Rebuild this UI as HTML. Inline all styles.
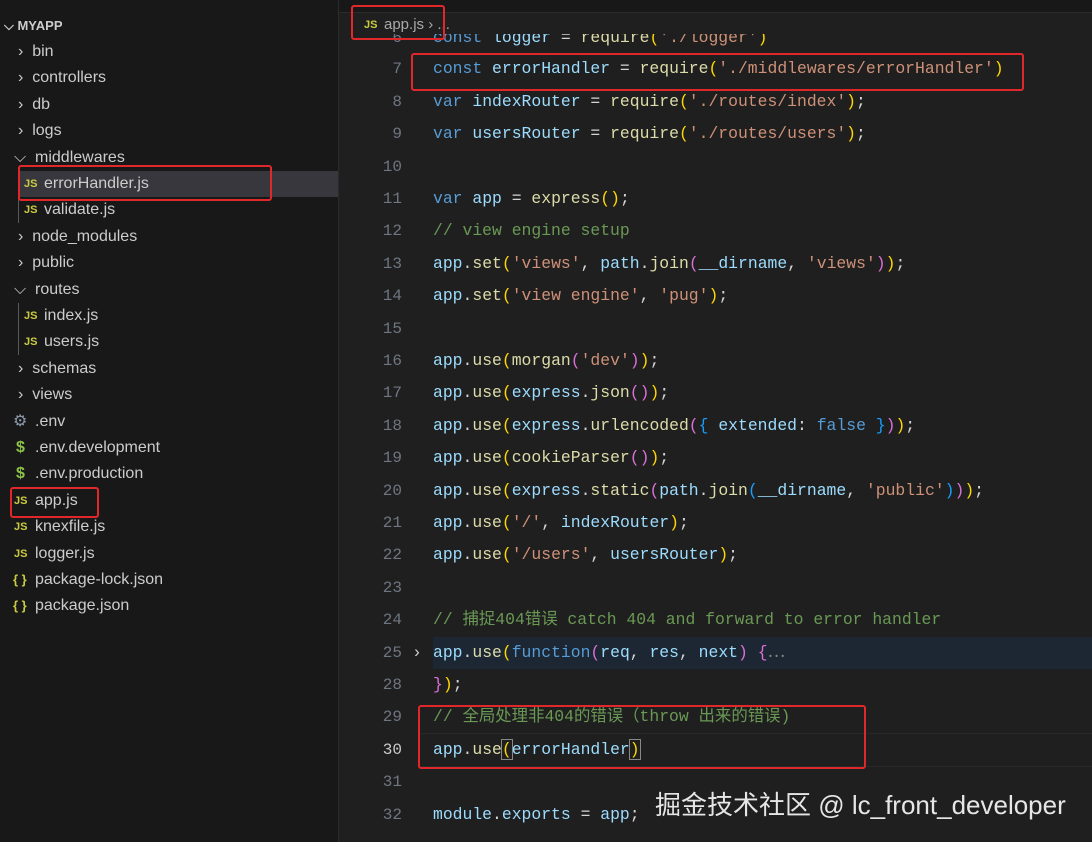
<!DOCTYPE html>
<html><head><meta charset="utf-8"><style>
body{margin:0;width:1092px;height:842px;background:#1f1f1f;overflow:hidden;position:relative;font-family:"Liberation Sans","Noto Sans CJK SC",sans-serif}
#side{position:absolute;left:0;top:0;width:338px;height:842px;background:#181818;border-right:1px solid #2b2b2b}
.r{position:absolute;left:0;height:26px;line-height:26px;font-size:16px;color:#cccccc;white-space:nowrap}
.js{font-family:"Liberation Sans",sans-serif;font-weight:bold;font-size:11px;color:#cbcb41;position:absolute}
.box{position:absolute;border:2px solid #e0282a;border-radius:3px}
#tabs{position:absolute;left:339px;top:0;right:0;height:12px;background:#181818;border-bottom:1px solid #2b2b2b}
.code{position:absolute;left:433px;font-family:"Liberation Mono","Noto Sans CJK SC",monospace;font-size:16.4px;color:#d4d4d4;white-space:pre;height:32px;line-height:32px}
.ln{position:absolute;left:350px;width:52px;text-align:right;font-family:"Liberation Mono",monospace;font-size:16px;color:#6e7681;height:32px;line-height:32px}
.k{color:#569cd6}.v{color:#9cdcfe}.f{color:#dcdcaa}.s{color:#ce9178}.c{color:#6a9955}.y{color:#ffd700}.p{color:#da70d6}.b{color:#179fff}
</style></head><body>
<div id="side">
<div class="r" style="top:13px;left:4px;font-size:13px;font-weight:bold">⌵ MYAPP</div>
<div class="r" style="top:39px;left:18px">›&nbsp;&nbsp;bin</div>
<div class="r" style="top:65px;left:18px">›&nbsp;&nbsp;controllers</div>
<div class="r" style="top:92px;left:18px">›&nbsp;&nbsp;db</div>
<div class="r" style="top:118px;left:18px">›&nbsp;&nbsp;logs</div>
<div class="r" style="top:145px;left:14px">⌵&nbsp;&nbsp;middlewares</div>
<div style="position:absolute;left:18px;top:171px;width:320px;height:26px;background:#37373d"></div>
<div style="position:absolute;left:18px;top:197px;width:1px;height:26px;background:#585858"></div>
<span class="js" style="left:24px;top:178px">JS</span><div class="r" style="top:171px;left:44px">errorHandler.js</div>
<span class="js" style="left:24px;top:204px">JS</span><div class="r" style="top:197px;left:44px">validate.js</div>
<div class="r" style="top:224px;left:18px">›&nbsp;&nbsp;node_modules</div>
<div class="r" style="top:250px;left:18px">›&nbsp;&nbsp;public</div>
<div class="r" style="top:277px;left:14px">⌵&nbsp;&nbsp;routes</div>
<div style="position:absolute;left:18px;top:303px;width:1px;height:52px;background:#585858"></div>
<span class="js" style="left:24px;top:310px">JS</span><div class="r" style="top:303px;left:44px">index.js</div>
<span class="js" style="left:24px;top:336px">JS</span><div class="r" style="top:329px;left:44px">users.js</div>
<div class="r" style="top:356px;left:18px">›&nbsp;&nbsp;schemas</div>
<div class="r" style="top:382px;left:18px">›&nbsp;&nbsp;views</div>
<div class="r" style="top:409px;left:13px;color:#8a9aa8">⚙</div><div class="r" style="top:409px;left:35px">.env</div>
<div class="r" style="top:435px;left:16px;color:#8dc149;font-weight:bold">$</div><div class="r" style="top:435px;left:35px">.env.development</div>
<div class="r" style="top:461px;left:16px;color:#8dc149;font-weight:bold">$</div><div class="r" style="top:461px;left:35px">.env.production</div>
<span class="js" style="left:14px;top:495px">JS</span><div class="r" style="top:488px;left:35px">app.js</div>
<span class="js" style="left:14px;top:521px">JS</span><div class="r" style="top:514px;left:35px">knexfile.js</div>
<span class="js" style="left:14px;top:548px">JS</span><div class="r" style="top:541px;left:35px">logger.js</div>
<div class="r" style="top:567px;left:13px;color:#cbcb41;font-size:13px;font-weight:bold">{ }</div><div class="r" style="top:567px;left:35px">package-lock.json</div>
<div class="r" style="top:593px;left:13px;color:#cbcb41;font-size:13px;font-weight:bold">{ }</div><div class="r" style="top:593px;left:35px">package.json</div>
</div>
<div id="tabs"></div>

<div class="ln" style="top:22px">6</div><div class="code" style="top:22px"><span class="k">const</span> <span class="v">logger</span> = <span class="f">require</span><span class="y">(</span><span class="s">'./logger'</span><span class="y">)</span></div>
<div style="position:absolute;left:339px;right:0;top:13px;height:21px;background:#1f1f1f"></div>
<span class="js" style="left:364px;top:19px">JS</span>
<div class="r" style="top:12px;left:384px;color:#a9a9a9;font-size:15px">app.js ›&nbsp;...</div>

<div style="position:absolute;left:433px;right:0;top:637px;height:32px;background:#1c2733"></div>
<div style="position:absolute;left:418px;right:0;top:733px;height:32px;border-top:1px solid #282828;border-bottom:1px solid #282828"></div>

<div class="ln" style="top:53px">7</div><div class="code" style="top:53px"><span class="k">const</span> <span class="v">errorHandler</span> = <span class="f">require</span><span class="y">(</span><span class="s">'./middlewares/errorHandler'</span><span class="y">)</span></div>
<div class="ln" style="top:86px">8</div><div class="code" style="top:86px"><span class="k">var</span> <span class="v">indexRouter</span> = <span class="f">require</span><span class="y">(</span><span class="s">'./routes/index'</span><span class="y">)</span>;</div>
<div class="ln" style="top:118px">9</div><div class="code" style="top:118px"><span class="k">var</span> <span class="v">usersRouter</span> = <span class="f">require</span><span class="y">(</span><span class="s">'./routes/users'</span><span class="y">)</span>;</div>
<div class="ln" style="top:151px">10</div>
<div class="ln" style="top:183px">11</div><div class="code" style="top:183px"><span class="k">var</span> <span class="v">app</span> = <span class="f">express</span><span class="y">()</span>;</div>
<div class="ln" style="top:215px">12</div><div class="code" style="top:215px"><span class="c">// view engine setup</span></div>
<div class="ln" style="top:248px">13</div><div class="code" style="top:248px"><span class="v">app</span>.<span class="f">set</span><span class="y">(</span><span class="s">'views'</span>, <span class="v">path</span>.<span class="f">join</span><span class="p">(</span><span class="v">__dirname</span>, <span class="s">'views'</span><span class="p">)</span><span class="y">)</span>;</div>
<div class="ln" style="top:280px">14</div><div class="code" style="top:280px"><span class="v">app</span>.<span class="f">set</span><span class="y">(</span><span class="s">'view engine'</span>, <span class="s">'pug'</span><span class="y">)</span>;</div>
<div class="ln" style="top:313px">15</div>
<div class="ln" style="top:345px">16</div><div class="code" style="top:345px"><span class="v">app</span>.<span class="f">use</span><span class="y">(</span><span class="f">morgan</span><span class="p">(</span><span class="s">'dev'</span><span class="p">)</span><span class="y">)</span>;</div>
<div class="ln" style="top:377px">17</div><div class="code" style="top:377px"><span class="v">app</span>.<span class="f">use</span><span class="y">(</span><span class="v">express</span>.<span class="f">json</span><span class="p">()</span><span class="y">)</span>;</div>
<div class="ln" style="top:410px">18</div><div class="code" style="top:410px"><span class="v">app</span>.<span class="f">use</span><span class="y">(</span><span class="v">express</span>.<span class="f">urlencoded</span><span class="p">(</span><span class="b">{</span> <span class="v">extended</span>: <span class="k">false</span> <span class="b">}</span><span class="p">)</span><span class="y">)</span>;</div>
<div class="ln" style="top:442px">19</div><div class="code" style="top:442px"><span class="v">app</span>.<span class="f">use</span><span class="y">(</span><span class="f">cookieParser</span><span class="p">()</span><span class="y">)</span>;</div>
<div class="ln" style="top:475px">20</div><div class="code" style="top:475px"><span class="v">app</span>.<span class="f">use</span><span class="y">(</span><span class="v">express</span>.<span class="f">static</span><span class="p">(</span><span class="v">path</span>.<span class="f">join</span><span class="b">(</span><span class="v">__dirname</span>, <span class="s">'public'</span><span class="b">)</span><span class="p">)</span><span class="y">)</span>;</div>
<div class="ln" style="top:507px">21</div><div class="code" style="top:507px"><span class="v">app</span>.<span class="f">use</span><span class="y">(</span><span class="s">'/'</span>, <span class="v">indexRouter</span><span class="y">)</span>;</div>
<div class="ln" style="top:539px">22</div><div class="code" style="top:539px"><span class="v">app</span>.<span class="f">use</span><span class="y">(</span><span class="s">'/users'</span>, <span class="v">usersRouter</span><span class="y">)</span>;</div>
<div class="ln" style="top:572px">23</div>
<div class="ln" style="top:604px">24</div><div class="code" style="top:604px"><span class="c">// 捕捉404错误 catch 404 and forward to error handler</span></div>
<div class="ln" style="top:637px">25</div><div class="code" style="top:637px;left:412px;color:#ccc">›</div><div class="code" style="top:637px"><span class="v">app</span>.<span class="f">use</span><span class="y">(</span><span class="k">function</span><span class="p">(</span><span class="v">req</span>, <span class="v">res</span>, <span class="v">next</span><span class="p">)</span> <span class="p">{</span><span style="color:#888">⋯</span></div>
<div class="ln" style="top:669px">28</div><div class="code" style="top:669px"><span class="p">}</span><span class="y">)</span>;</div>
<div class="ln" style="top:701px">29</div><div class="code" style="top:701px"><span class="c">// 全局处理非404的错误（throw 出来的错误)</span></div>
<div class="ln" style="top:734px;color:#cccccc">30</div><div class="code" style="top:734px"><span class="v">app</span>.<span class="f">use</span><span class="y" style="outline:1px solid #888">(</span><span class="v">errorHandler</span><span class="y" style="outline:1px solid #888">)</span></div>
<div class="ln" style="top:766px">31</div>
<div class="ln" style="top:799px">32</div><div class="code" style="top:799px"><span class="v">module</span>.<span class="v">exports</span> = <span class="v">app</span>;</div>

<div style="position:absolute;left:655px;top:785px;font-size:26px;color:#e6e6e6;white-space:nowrap">掘金技术社区 @ lc_front_developer</div>

<div class="box" style="left:18px;top:165px;width:250px;height:32px"></div>
<div class="box" style="left:10px;top:487px;width:85px;height:27px"></div>
<div class="box" style="left:351px;top:5px;width:90px;height:31px"></div>
<div class="box" style="left:411px;top:53px;width:609px;height:34px"></div>
<div class="box" style="left:418px;top:705px;width:444px;height:60px"></div>
</body></html>
